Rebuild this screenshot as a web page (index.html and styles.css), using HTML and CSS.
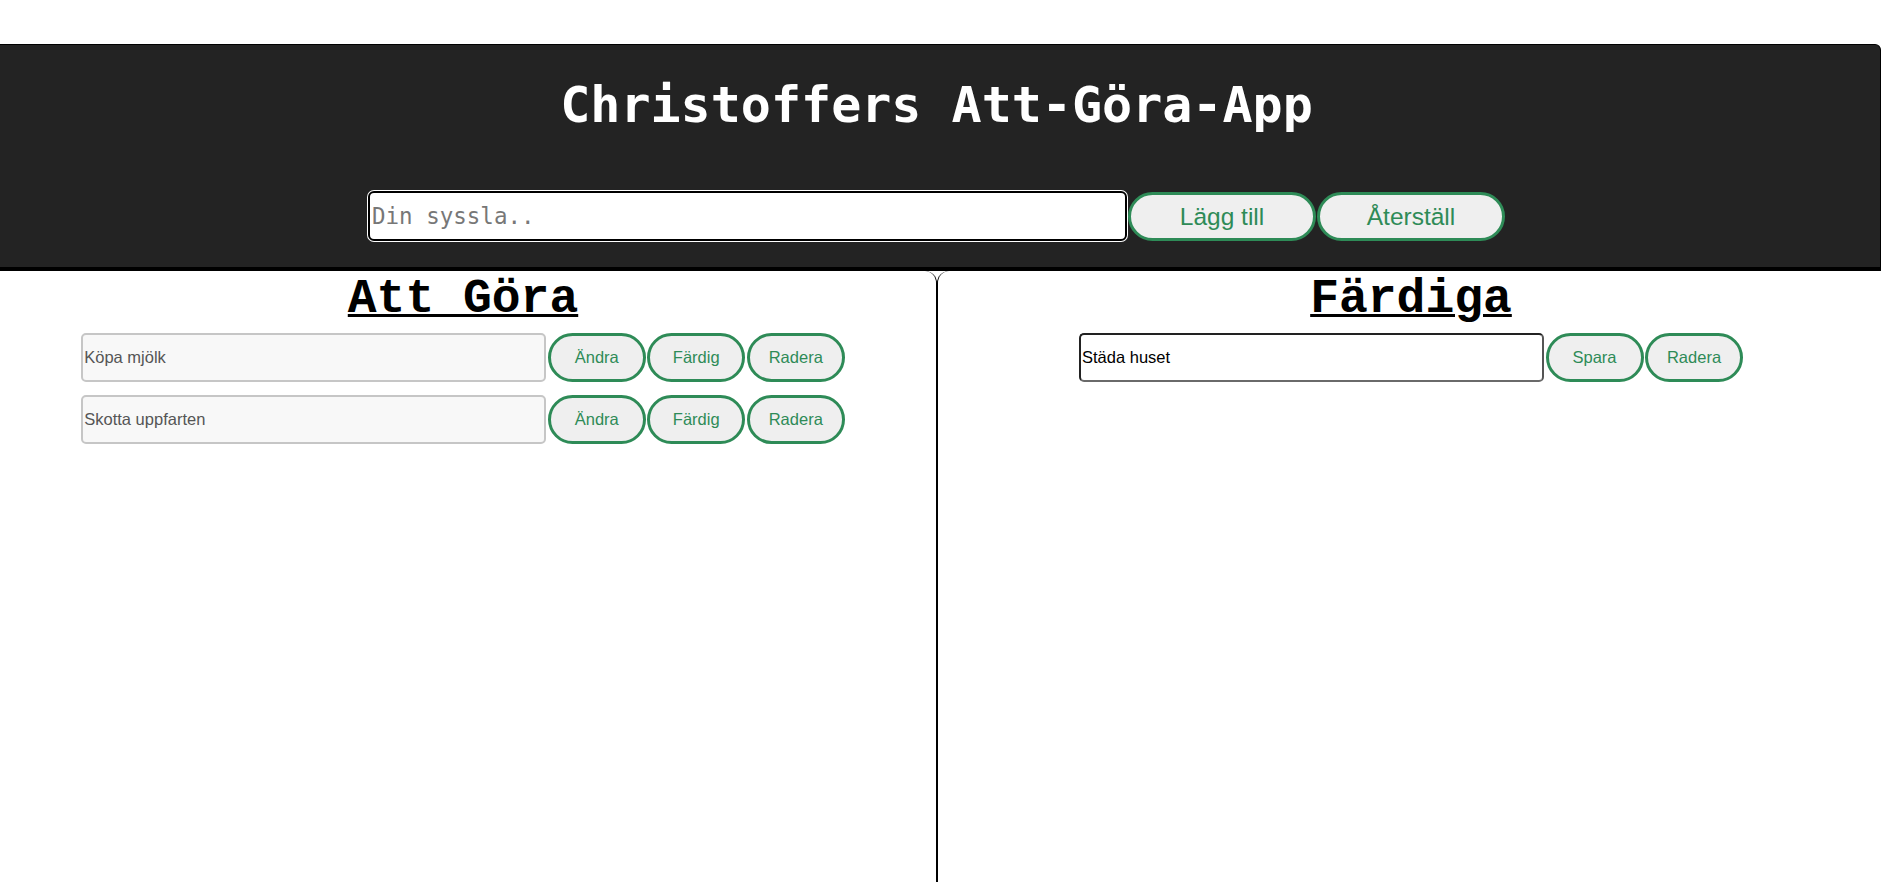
FILE: index.html
```html
<!DOCTYPE html>
<html lang="sv">
<head>
<meta charset="utf-8">
<title>Christoffers Att-Göra-App</title>
<link rel="stylesheet" href="styles.css">
</head>
<body>
<header class="top">
  <h1 class="title">Christoffers Att-Göra-App</h1>
  <form class="add-form">
    <input class="new-task" type="text" placeholder="Din syssla..">
    <button type="button" class="btn btn-big">Lägg till</button>
    <button type="button" class="btn btn-big">Återställ</button>
  </form>
</header>
<main class="lists">
  <section class="col col-todo">
    <h2 class="col-title">Att Göra</h2>
    <div class="row">
      <input class="task task-locked" type="text" value="Köpa mjölk" readonly>
      <button type="button" class="btn">Ändra</button>
      <button type="button" class="btn">Färdig</button>
      <button type="button" class="btn">Radera</button>
    </div>
    <div class="row">
      <input class="task task-locked" type="text" value="Skotta uppfarten" readonly>
      <button type="button" class="btn">Ändra</button>
      <button type="button" class="btn">Färdig</button>
      <button type="button" class="btn">Radera</button>
    </div>
  </section>
  <section class="col col-done">
    <h2 class="col-title">Färdiga</h2>
    <div class="row">
      <input class="task task-edit" type="text" value="Städa huset">
      <button type="button" class="btn">Spara</button>
      <button type="button" class="btn">Radera</button>
    </div>
  </section>
</main>
</body>
</html>
```
FILE: styles.css
```css
html, body {
  margin: 0;
  padding: 0;
  background: #fff;
}
body {
  font-family: "Liberation Sans", Arial, sans-serif;
  min-height: 100vh;
  display: flex;
  flex-direction: column;
}
.top {
  margin-top: 44px;
  background: #232323;
  border-top: 1px solid #000;
  border-right: 1px solid #000;
  border-bottom: 4px solid #000;
  border-top-right-radius: 6px;
  padding: 30px 7px 26px 0;
  text-align: center;
}
.title {
  margin: 0;
  font-family: "DejaVu Sans Mono", "Liberation Mono", monospace;
  font-weight: bold;
  font-size: 50px;
  line-height: 60px;
  color: #fff;
}
.add-form {
  margin-top: 56px;
  display: flex;
  justify-content: center;
  gap: 1px;
}
.new-task {
  box-sizing: border-box;
  width: 759px;
  height: 50px;
  margin: 0;
  padding: 1px 2px;
  background: #fff;
  border: 2px solid #000;
  border-radius: 6px;
  box-shadow: 0 0 0 1px #fff;
  font-family: "DejaVu Sans Mono", "Liberation Mono", monospace;
  font-size: 22.5px;
  color: #000;
  outline: none;
}
.new-task::placeholder {
  color: #777;
}
.btn {
  box-sizing: border-box;
  width: 98px;
  height: 49px;
  margin: 0;
  padding: 0;
  background: #efefef;
  border: 3px solid #2e8b57;
  border-radius: 25px;
  color: #2e8b57;
  font-family: "Liberation Sans", Arial, sans-serif;
  font-size: 16.5px;
  cursor: pointer;
}
.btn-big {
  width: 188px;
  height: 49px;
  margin-top: 1px;
  font-size: 24.5px;
}
.lists {
  flex: 1;
  display: grid;
  grid-template-columns: 937px 1fr;
}
.col {
  min-height: 100%;
}
.col-todo {
  border-right: 1px solid #000;
  border-top-right-radius: 12px;
  padding-right: 10px;
}
.col-done {
  border-left: 1px solid #000;
  border-top-left-radius: 12px;
  padding-left: 3px;
}
.col-title {
  margin: 0 0 6px;
  text-align: center;
  font-family: "Liberation Mono", "Courier New", monospace;
  font-weight: bold;
  font-size: 48px;
  line-height: 56px;
  color: #000;
  text-decoration: underline;
  text-decoration-thickness: 3px;
}
.row {
  display: flex;
  justify-content: center;
  gap: 1.5px;
  margin-bottom: 13px;
}
.task {
  box-sizing: border-box;
  width: 465px;
  height: 49px;
  margin: 0;
  padding: 0 1px;
  border-radius: 5px;
  font-family: "Liberation Sans", Arial, sans-serif;
  font-size: 16.5px;
  outline: none;
}
.task-locked {
  background: #f8f8f8;
  border: 2px solid #c6c6c6;
  color: #555;
}
.task-edit {
  background: #fff;
  border: 2px solid #222;
  border-bottom-color: #6a6a6a;
  border-right-color: #555;
  color: #000;
}
```
